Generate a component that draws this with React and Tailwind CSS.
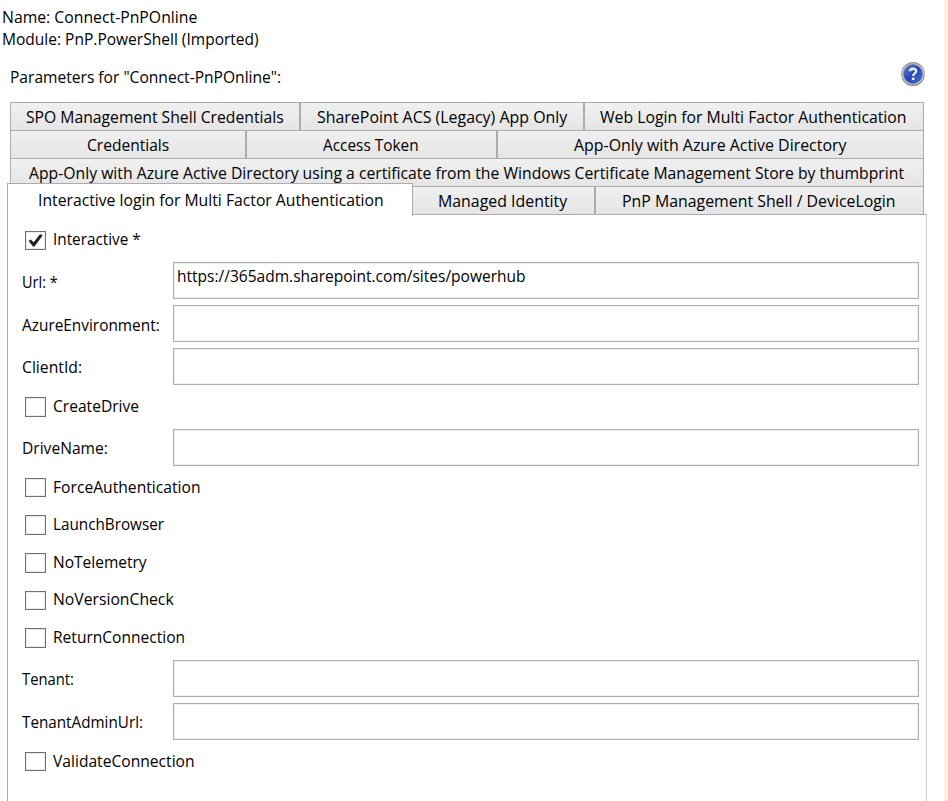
import { useLayoutEffect, useRef, useState } from "react";

// Text condensed or widened horizontally so its advance equals `w`.
function Fit({ w, children }) {
  const ref = useRef(null);
  const [scale, setScale] = useState(1);
  useLayoutEffect(() => {
    const update = () => setScale(w / ref.current.offsetWidth);
    update();
    document.fonts.ready.then(update);
  }, [w]);
  return (
    <span className="block h-6 shrink-0 whitespace-nowrap text-left" style={{ width: w }}>
      <span ref={ref} className="inline-block origin-left" style={{ transform: `scaleX(${scale})` }}>
        {children}
      </span>
    </span>
  );
}

const tabRows = [
  [
    { label: "SPO Management Shell Credentials", w: 258, box: "w-[290px]", pad: "pl-[15px]" },
    { label: "SharePoint ACS (Legacy) App Only", w: 250, box: "w-[284px]", pad: "pl-[16px]" },
    { label: "Web Login for Multi Factor Authentication", w: 307, box: "w-[340px]", pad: "pl-[15px]" },
  ],
  [
    { label: "Credentials", w: 82, box: "w-[236px]", pad: "pl-[76px]" },
    { label: "Access Token", w: 96, box: "w-[251px]", pad: "pl-[76px]" },
    { label: "App-Only with Azure Active Directory", w: 272, box: "w-[427px]", pad: "pl-[76px]" },
  ],
  [
    {
      label:
        "App-Only with Azure Active Directory using a certificate from the Windows Certificate Management Store by thumbprint",
      w: 875,
      box: "w-[914px]",
      pad: "pl-[18px]",
    },
  ],
];

const lastTabs = [
  { label: "Managed Identity", w: 129, box: "w-[183px]", pad: "pl-[25px]" },
  { label: "PnP Management Shell / DeviceLogin", w: 274, box: "w-[329px]", pad: "pl-[26px]" },
];

function Tab({ tab }) {
  return (
    <div
      className={`h-7 shrink-0 border-x border-t border-[#acacac] bg-linear-to-b from-[#f0f0f0] to-[#e5e5e5] pt-[2px] ${tab.box} ${tab.pad}`}
    >
      <Fit w={tab.w}>{tab.label}</Fit>
    </div>
  );
}

function Check({ label, w, row, box = "h-5", text = "mt-[3px]", checked = false }) {
  return (
    <div className={`flex shrink-0 items-start pl-[17px] ${row}`}>
      <div
        className={`mt-[6px] flex w-[21px] shrink-0 items-center justify-center border border-[#707070] bg-white shadow-[inset_0_0_0_1px_#ececec] ${box}`}
      >
        {checked && (
          <svg width="15" height="15" viewBox="0 0 15 15" className="shrink-0">
            <path d="M0.6 8 L2.6 6.4 L5.7 9.3 L11.7 1.6 L14.2 1.6 L14.2 3 L6.6 13.4 L5 13.4 Z" fill="#212121" />
          </svg>
        )}
      </div>
      <div className={`ml-[7px] ${text}`}>
        <Fit w={w}>{label}</Fit>
      </div>
    </div>
  );
}

function Field({ label, w, value, vw, text = "pt-[7px]" }) {
  return (
    <div className="flex h-[43px] shrink-0 items-start pl-[14px]">
      <div className={`w-[151px] shrink-0 ${text}`}>
        <Fit w={w}>{label}</Fit>
      </div>
      <div className="h-[37px] w-[746px] shrink-0 border border-[#abadb3] bg-white pl-[3px] pt-px shadow-[inset_0_0_0_1px_#f0f0f2]">
        {value && <Fit w={vw}>{value}</Fit>}
      </div>
    </div>
  );
}

function HelpIcon() {
  return (
    <svg width="26" height="26" viewBox="0 0 26 26">
      <defs>
        <linearGradient id="ring" x1="0" y1="0" x2="0" y2="1">
          <stop offset="0" stopColor="#8f8f8f" />
          <stop offset="0.5" stopColor="#b0b0b0" />
          <stop offset="1" stopColor="#777777" />
        </linearGradient>
        <linearGradient id="ball" x1="0" y1="0" x2="1" y2="1">
          <stop offset="0" stopColor="#6884d6" />
          <stop offset="0.5" stopColor="#2445b4" />
          <stop offset="1" stopColor="#4a76e4" />
        </linearGradient>
      </defs>
      <circle cx="13" cy="13" r="12" fill="url(#ring)" />
      <circle cx="13" cy="13" r="10.8" fill="#c4c4c8" />
      <circle cx="13" cy="13" r="9.2" fill="url(#ball)" stroke="#3a52a0" strokeWidth="0.8" />
      <path d="M10 10.3 C10.1 6.9 16.2 6.8 16.2 10.1 C16.2 12.5 13.2 12.3 13.2 15" fill="none" stroke="#e9edfc" strokeWidth="2.4" />
      <rect x="11.9" y="16.6" width="2.6" height="2.5" rx="0.6" fill="#e9edfc" />
    </svg>
  );
}

export default function App() {
  return (
    <div className="flex h-[801px] w-[948px] overflow-hidden bg-white font-['Open_Sans','Noto_Sans',sans-serif] text-[16.5px] font-[370] leading-6 text-black">
      <div className="flex w-[944px] shrink-0 flex-col">
        <div className="flex h-[102px] shrink-0 justify-between">
          <div className="pl-[2px] pt-[5px]">
            <div className="h-[22px]">
              <Fit w={195}>Name: Connect-PnPOnline</Fit>
            </div>
            <div className="h-[38px]">
              <Fit w={257}>Module: PnP.PowerShell (Imported)</Fit>
            </div>
            <div className="pl-[7.5px]">
              <Fit w={271}>Parameters for "Connect-PnPOnline":</Fit>
            </div>
          </div>
          <div className="pr-[18px] pt-[61px]">
            <HelpIcon />
          </div>
        </div>

        {tabRows.map((row, i) => (
          <div key={i} className="flex h-7 shrink-0 pl-[10px]">
            {row.map((tab) => (
              <Tab key={tab.label} tab={tab} />
            ))}
          </div>
        ))}
        <div className="flex h-7 shrink-0 items-end pl-[7px]">
          <div className="relative z-10 -mb-[2px] h-[33px] w-[406px] shrink-0 border-x border-t border-[#acacac] bg-white pl-[29.5px] pt-[4px]">
            <Fit w={346}>Interactive login for Multi Factor Authentication</Fit>
          </div>
          <div className="-ml-px flex">
            {lastTabs.map((tab) => (
              <Tab key={tab.label} tab={tab} />
            ))}
          </div>
        </div>

        <div className="ml-[7px] flex w-[920px] grow flex-col border-l border-r border-t border-l-[#acacac] border-r-[#d2d2d2] border-t-[#acacac] bg-white pt-[10px]">
          <Check label="Interactive *" w={88} row="h-[37px]" box="h-[19px]" text="mt-[2px]" checked />
          <Field label="Url: *" w={36} value="https://365adm.sharepoint.com/sites/powerhub" vw={349} text="pt-[8px]" />
          <Field label="AzureEnvironment:" w={138} text="pt-[8px]" />
          <Field label="ClientId:" w={60} />
          <Check label="CreateDrive" w={86} row="h-[38px]" />
          <Field label="DriveName:" w={86} />
          <Check label="ForceAuthentication" w={148} row="h-[37px]" box="h-[19px]" />
          <Check label="LaunchBrowser" w={111} row="h-[38px]" />
          <Check label="NoTelemetry" w={94} row="h-[38px]" />
          <Check label="NoVersionCheck" w={121} row="h-[37px]" box="h-[19px]" text="mt-[2px]" />
          <Check label="ReturnConnection" w={132} row="h-[38px]" />
          <Field label="Tenant:" w={52} />
          <Field label="TenantAdminUrl:" w={121} />
          <Check label="ValidateConnection" w={142} row="h-[37px]" box="h-[19px]" />
        </div>
      </div>
      <div className="w-1 shrink-0 bg-[#ffefdf]" />
    </div>
  );
}
